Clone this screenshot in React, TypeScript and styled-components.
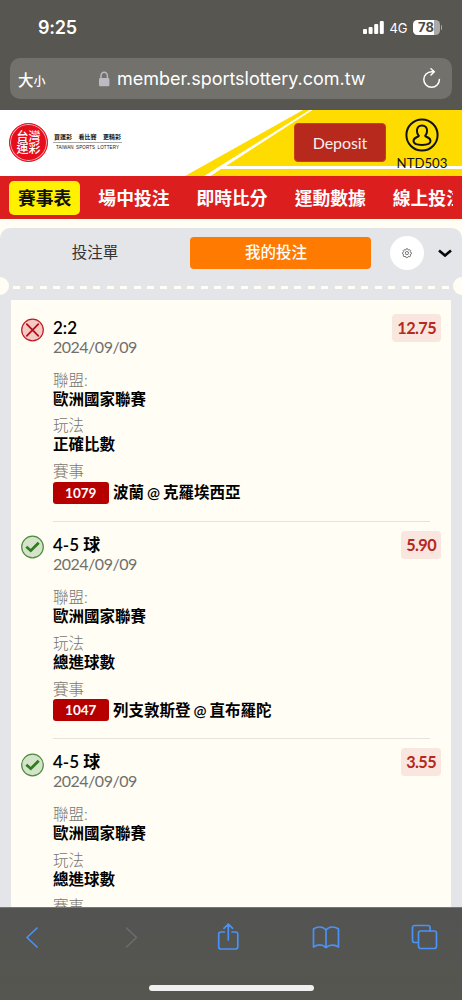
import React from "react";
import styled, { createGlobalStyle, css } from "styled-components";

const Global = createGlobalStyle`
  * { box-sizing: border-box; }
  body { margin: 0; background: #fffdf4; overflow: hidden; }
`;

const Screen = styled.div`
  width: 462px;
  height: 1000px;
  display: flex;
  flex-direction: column;
  overflow: hidden;
  background: #fffdf4;
  font-family: Lato, "Noto Sans CJK TC", sans-serif;
  white-space: nowrap;
`;

const BrowserTop = styled.div`
  flex: none;
  height: 110px;
  background: #575650;
  color: #fff;
  font-family: Inter, "Noto Sans CJK TC", sans-serif;
`;

const StatusBar = styled.div`
  height: 58px;
  padding: 0 20px 3px 38px;
  display: flex;
  align-items: center;
`;

const Clock = styled.span`
  flex: 1;
  font-size: 18px;
  font-weight: 600;
  letter-spacing: -0.2px;
`;

const Network = styled.span`
  margin: 1px 5px 0 5px;
  font-size: 13px;
  letter-spacing: 0;
`;

const Battery = styled.div`
  width: 27px;
  height: 15px;
  border-radius: 4.5px;
  background: linear-gradient(90deg, #fff 78%, #aaa9a6 78%);
  color: #4b4a46;
  font-size: 13px;
  line-height: 15px;
  font-weight: 700;
  text-align: center;
`;

const BatteryTip = styled.div`
  width: 1.5px;
  height: 5px;
  margin-left: 1px;
  border-radius: 0 2px 2px 0;
  background: #aaa9a6;
`;

const AddressBar = styled.div`
  height: 41px;
  margin: 0 10px;
  padding: 0 11px 0 8px;
  border-radius: 10px;
  background: #72716b;
  display: flex;
  align-items: center;
`;

const TextSize = styled.div`
  width: 80px;
  font-size: 15.5px;
  font-weight: 500;
  small { font-size: 12px; }
`;

const Url = styled.span`
  flex: 1;
  padding-left: 7px;
  font-size: 18px;
  letter-spacing: -0.03px;
`;

const Header = styled.header`
  flex: none;
  height: 66px;
  display: flex;
  align-items: flex-start;
  position: relative;
  background: #fff;
`;

const Stripes = styled.svg`
  position: absolute;
  inset: 0;
`;

const Seal = styled.div`
  width: 39px;
  height: 39px;
  margin: 13px 5px 0 9px;
  border-radius: 50%;
  background: #e60d1c;
  border: 1px solid #e60d1c;
  box-shadow: inset 0 0 0 1px #f7b4b6;
  color: #fff;
  font-size: 12px;
  line-height: 12px;
  font-weight: 500;
  text-align: center;
  padding-top: 7px;
  white-space: pre-line;
`;

const Slogan = styled.div`
  width: 69px;
  margin-top: 23px;
  color: #111;
  text-align: center;
`;

const SloganMain = styled.div`
  display: flex;
  justify-content: space-between;
  padding: 0 1px;
  height: 10px;
  border-bottom: 1px solid #aaa;
  font-size: 6px;
  line-height: 8px;
  font-weight: 700;
`;

const SloganSub = styled.div`
  padding-top: 1px;
  font: 400 4.5px/7px "Liberation Sans", sans-serif;
  letter-spacing: 0.12px;
  word-spacing: 1px;
`;

const Deposit = styled.button`
  position: relative;
  width: 92px;
  height: 39px;
  margin: 13px 0 0 auto;
  padding: 0;
  border: 1px solid #cb3e17;
  border-radius: 4px;
  background: #b7281d;
  color: #f8efee;
  font: 400 16px Lato, sans-serif;
  letter-spacing: -0.1px;
`;

const Account = styled.div`
  position: relative;
  width: 72px;
  padding: 8px 0 0;
  margin-right: 4px;
  display: flex;
  flex-direction: column;
  align-items: center;
  color: #111;
  font-size: 13.2px;
  line-height: 16px;
  svg { margin-bottom: 3px; }
`;

const Nav = styled.nav`
  flex: none;
  height: 43px;
  padding: 0 9px;
  background: #dc1e1f;
  border-bottom: 1px solid #cf2a20;
  margin-bottom: 9px;
`;

const NavStrip = styled.div`
  display: flex;
  height: 43px;
  align-items: center;
  gap: 27px;
  overflow: hidden;
`;

const NavItem = styled.span<{ $active?: boolean }>`
  flex: none;
  font-size: 17.8px;
  line-height: 34px;
  font-weight: 600;
  color: #fff;
  ${(p) =>
    p.$active &&
    css`
      padding: 0 9px;
      margin-right: -9px;
      border-radius: 5px;
      background: #fff100;
      color: #111;
    `}
`;

const Panel = styled.main`
  flex: 1;
  min-height: 0;
  overflow: hidden;
  background: #e4e5e8;
  border-radius: 10px 10px 0 0;
`;

const TabRow = styled.div`
  height: 49px;
  padding-right: 10px;
  display: flex;
  align-items: center;
`;

const Tab = styled.div<{ $active?: boolean }>`
  width: ${(p) => (p.$active ? 181 : 190)}px;
  height: 32px;
  padding-right: ${(p) => (p.$active ? 9 : 0)}px;
  border-radius: 4px;
  line-height: 31px;
  font-size: 15.5px;
  text-align: center;
  color: ${(p) => (p.$active ? "#fff" : "#333")};
  background: ${(p) => (p.$active ? "#ff7a00" : "transparent")};
  font-weight: ${(p) => (p.$active ? 500 : 400)};
`;

const RoundButton = styled.div`
  width: 34px;
  height: 34px;
  margin: 0 14px 0 19px;
  border-radius: 50%;
  background: #fff;
  display: flex;
  align-items: center;
  justify-content: center;
`;

const Perforation = styled.div`
  height: 18px;
  display: flex;
  align-items: center;
  margin-bottom: 5px;
`;

const Notch = styled.i<{ $right?: boolean }>`
  width: 9px;
  height: 18px;
  background: #fffdf4;
  border-radius: ${(p) => (p.$right ? "9px 0 0 9px" : "0 9px 9px 0")};
`;

const Dashes = styled.i`
  flex: 1;
  height: 3px;
  margin: 2px 3px 0 4px;
  background: repeating-linear-gradient(90deg, #fffdf4 0 7px, transparent 7px 13.4px);
`;

const BetList = styled.div`
  margin: 0 11px;
  padding-top: 4.6px;
  background: #fffdf4;
`;

const Bet = styled.article`
  display: flex;
  height: 217.4px;
  padding: 13px 10px 0 10px;
`;

const StatusIcon = styled.svg`
  flex: none;
  margin: 0.5px 9px 0 0;
`;

const BetBody = styled.div`
  flex: 1;
  height: 204.4px;
  margin-right: 11px;
  border-bottom: 1px solid #e5e1dd;
  font-size: 15.5px;
  line-height: 19px;
`;

const BetHead = styled.div`
  display: flex;
  justify-content: space-between;
  height: 53px;
`;

const Selection = styled.div`
  color: #000;
  font-size: 17px;
  line-height: 20px;
  font-weight: 600;
`;

const DateText = styled.div`
  color: #706f6c;
  font-size: 16px;
  line-height: 17px;
  letter-spacing: -0.5px;
`;

const Odds = styled.div`
  height: 28px;
  margin: -4px -11px 0 0;
  padding: 0 5px;
  border-radius: 4px;
  background: #f8e6df;
  color: #b7281d;
  font-size: 16.3px;
  line-height: 28px;
  font-weight: 700;
  letter-spacing: -0.6px;
`;

const Field = styled.div`
  margin-bottom: 7.8px;
`;

const Label = styled.div`
  color: #777672;
  height: 19px;
  font-weight: 300;
`;

const Value = styled.div`
  color: #000;
  height: 19px;
  font-weight: 600;
`;

const Match = styled.div`
  display: flex;
  align-items: center;
  height: 23px;
  gap: 4.5px;
  color: #000;
  font-weight: 600;
  word-spacing: -0.9px;
`;

const Code = styled.span`
  width: 55.5px;
  height: 22px;
  border-radius: 3px;
  background: #b60000;
  color: #fff;
  font-size: 13.5px;
  line-height: 22px;
  font-weight: 700;
  text-align: center;
`;

const BrowserBottom = styled.footer`
  flex: none;
  height: 93px;
  background: linear-gradient(#535352, #565650);
  border-top: 1px solid #777674;
  display: flex;
  flex-direction: column;
  align-items: center;
`;

const Toolbar = styled.div`
  width: 100%;
  height: 77px;
  padding: 12px 24px 0 18px;
  display: flex;
  justify-content: space-between;
  svg { fill: none; stroke: #4893f5; stroke-width: 1.7; stroke-linecap: round; stroke-linejoin: round; }
`;

const Forward = styled.svg`
  && { stroke: #6c6c6b; }
`;

const HomeBar = styled.div`
  width: 165px;
  height: 6px;
  border-radius: 3px;
  background: #f0f0f0;
`;

interface BetData {
  won: boolean;
  pick: string;
  odds: string;
  play: string;
  code: string;
  match: string;
}

const bets: BetData[] = [
  { won: false, pick: "2:2", odds: "12.75", play: "正確比數", code: "1079", match: "波蘭 @ 克羅埃西亞" },
  { won: true, pick: "4-5 球", odds: "5.90", play: "總進球數", code: "1047", match: "列支敦斯登 @ 直布羅陀" },
  { won: true, pick: "4-5 球", odds: "3.55", play: "總進球數", code: "", match: "" },
];

const navItems = ["賽事表", "場中投注", "即時比分", "運動數據", "線上投注"];

function Result({ won }: { won: boolean }) {
  return (
    <StatusIcon width="23" height="24" viewBox="0 0 23 24" fill="none">
      <circle cx="11.5" cy="12" r="10.8" fill={won ? "#d5e3cb" : "#f3cbc6"} stroke={won ? "#4c8c3c" : "#c01b20"} strokeWidth="1.2" />
      {won ? (
        <path d="M5.3 11.8 9.8 15.7 17.7 7.800" stroke="#2f7d1f" strokeWidth="2.8" />
      ) : (
        <path d="m5.8 6.2 11.5 11.6M17.3 6.2 5.8 17.8" stroke="#b80d13" strokeWidth="1.8" strokeLinecap="round" />
      )}
    </StatusIcon>
  );
}

function BetCard({ bet }: { bet: BetData }) {
  return (
    <Bet>
      <Result won={bet.won} />
      <BetBody>
        <BetHead>
          <div>
            <Selection>{bet.pick}</Selection>
            <DateText>2024/09/09</DateText>
          </div>
          <Odds>{bet.odds}</Odds>
        </BetHead>
        <Field>
          <Label>聯盟:</Label>
          <Value>歐洲國家聯賽</Value>
        </Field>
        <Field>
          <Label>玩法</Label>
          <Value>{bet.play}</Value>
        </Field>
        <Label>賽事</Label>
        {bet.code && (
          <Match>
            <Code>{bet.code}</Code>
            <span>{bet.match}</span>
          </Match>
        )}
      </BetBody>
    </Bet>
  );
}

export default function App() {
  return (
    <>
      <Global />
      <Screen>
        <BrowserTop>
          <StatusBar>
            <Clock>9:25</Clock>
            <svg width="21" height="13" viewBox="0 0 21 13" fill="#fff">
              <rect x="0" y="8" width="4" height="5" rx="1.1" />
              <rect x="5.6" y="6" width="4" height="7" rx="1.1" />
              <rect x="11.2" y="3" width="4" height="10" rx="1.1" />
              <rect x="16.8" y="0" width="4" height="13" rx="1.1" />
            </svg>
            <Network>4G</Network>
            <Battery>78</Battery>
            <BatteryTip />
          </StatusBar>
          <AddressBar>
            <TextSize>大<small>小</small></TextSize>
            <svg width="12" height="16" viewBox="0 0 12 16">
              <rect x="1" y="7" width="10.4" height="8.3" rx="1.4" fill="#bdbbc1" />
              <path d="M3 7V4.4a3.2 3.2 0 0 1 6.4 0V7" fill="none" stroke="#bdbbc1" strokeWidth="1.4" />
            </svg>
            <Url>member.sportslottery.com.tw</Url>
            <svg width="19" height="22" viewBox="0 0 19 22" fill="none" stroke="#fff" strokeWidth="1.5" strokeLinecap="round" strokeLinejoin="round">
              <path d="M17.4 11.500a7.8 7.8 0 1 1-7.8-7.800h2.500M9 .8l3.300 3L9 7" />
            </svg>
          </AddressBar>
        </BrowserTop>

        <Header>
          <Stripes width="462" height="66" viewBox="0 0 462 66">
            <path d="M303 0H462V66H185Z" fill="#ffdc00" />
            <path d="M309.500 0H312.500L226 56H462V59H221L210.500 66H204Z" fill="#fff" />
          </Stripes>
          <Seal>{"台灣\n運彩"}</Seal>
          <Slogan>
            <SloganMain><span>買運彩</span><span>看比賽</span><span>更精彩</span></SloganMain>
            <SloganSub>TAIWAN SPORTS LOTTERY</SloganSub>
          </Slogan>
          <Deposit>Deposit</Deposit>
          <Account>
            <svg width="34" height="34" viewBox="0 0 34 34" fill="none" stroke="#111" strokeWidth="2">
              <circle cx="17" cy="17" r="15.6" />
              <path d="M17 7.4c-3.2 0-5.1 2.2-5.1 5.4 0 2.3.8 3.7 1.9 5-.5 1.4-5.3 1.3-5.3 5.2 0 2.8 3 3.9 8.500 3.900s8.500-1.100 8.500-3.900c0-3.900-4.800-3.800-5.300-5.200 1.100-1.300 1.900-2.700 1.900-5 0-3.200-1.900-5.400-5.100-5.400Z" />
            </svg>
            NTD503
          </Account>
        </Header>

        <Nav>
          <NavStrip>
            {navItems.map((item, i) => (
              <NavItem key={item} $active={i === 0}>{item}</NavItem>
            ))}
          </NavStrip>
        </Nav>

        <Panel>
          <TabRow>
            <Tab>投注單</Tab>
            <Tab $active>我的投注</Tab>
            <RoundButton>
              <svg width="10" height="10" viewBox="0 0 20 20" fill="none" stroke="#555" strokeWidth="1.6">
                <path d="m8.300 1.500-.6 2.100-1.700.7-2-.9-1.700 1.700 1 2-.7 1.600-1.900.8v2l2 .8.600 1.700-1 1.900 1.700 1.700 2-.9 1.700.7.600 2h3l.7-2 1.600-.7 2 .9 1.700-1.700-.9-1.900.6-1.700 2-.8v-2l-2-.8-.6-1.600.9-2-1.700-1.700-2 .9-1.600-.7-.7-2.100Z" />
                <circle cx="9.800" cy="10.200" r="3.200" />
              </svg>
            </RoundButton>
            <svg width="14" height="10" viewBox="0 0 14 10" fill="none" stroke="#080808" strokeWidth="2.6">
              <path d="m1 2.500 6 5 6-5" />
            </svg>
          </TabRow>
          <Perforation>
            <Notch />
            <Dashes />
            <Notch $right />
          </Perforation>
          <BetList>
            {bets.map((bet, i) => <BetCard key={i} bet={bet} />)}
          </BetList>
        </Panel>

        <BrowserBottom>
          <Toolbar>
            <svg width="28" height="34" viewBox="0 0 28 34"><path d="M19 8 9 17.500 19 27" /></svg>
            <Forward width="28" height="34" viewBox="0 0 28 34"><path d="m10.500 8 10 9.500-10 9.500" /></Forward>
            <svg width="28" height="34" viewBox="0 0 28 34"><path d="M10.500 12H7a2.300 2.300 0 0 0-2.300 2.300v12.400A2.300 2.300 0 0 0 7 29h14.500a2.300 2.300 0 0 0 2.300-2.300V14.300a2.300 2.300 0 0 0-2.300-2.300H18M14.300 20V4M10 8.300 14.300 4l4.300 4.300" /></svg>
            <svg width="28" height="34" viewBox="0 0 28 34"><path d="M14 27.500V10C11 5.900 5 6.400 1.500 9v18c4-2.500 9-2.500 12.500.5C17.500 24.500 23 24.500 26.500 27V9C23 6.400 17 5.900 14 10" /></svg>
            <svg width="28" height="34" viewBox="0 0 28 34"><path d="M8 22.500H4.800a2.300 2.300 0 0 1-2.300-2.300V7.800a2.300 2.300 0 0 1 2.300-2.300h13a2.300 2.300 0 0 1 2.300 2.300V11" /><rect x="8.500" y="11" width="18" height="17.500" rx="2.300" /></svg>
          </Toolbar>
          <HomeBar />
        </BrowserBottom>
      </Screen>
    </>
  );
}
